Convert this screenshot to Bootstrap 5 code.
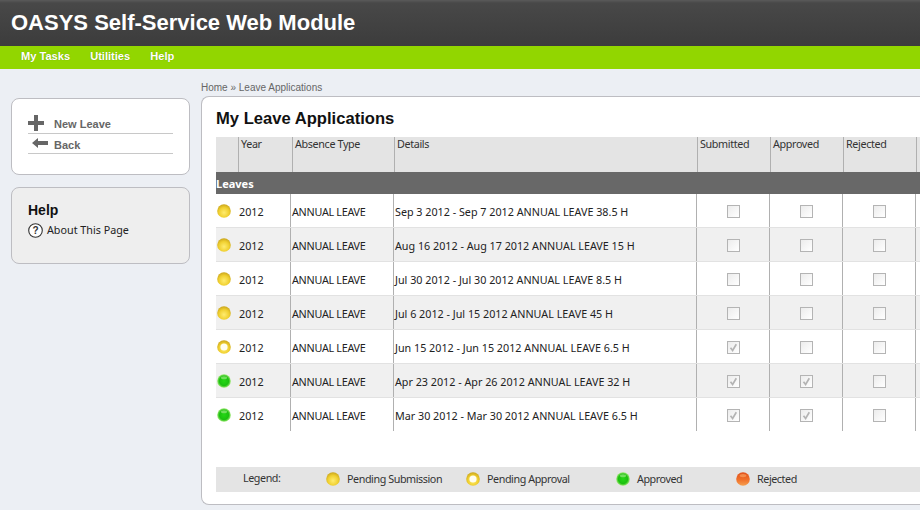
<!DOCTYPE html>
<html lang="en">
<head>
<meta charset="utf-8">
<title>OASYS Self-Service Web Module</title>
<link rel="stylesheet" href="https://cdn.jsdelivr.net/npm/bootstrap@5.3.0/dist/css/bootstrap.min.css">
<style>
html,body{height:510px;overflow:hidden}
body{background:#eceff4;font-family:"Noto Sans","Open Sans",sans-serif;font-size:10.75px;color:#222;line-height:1.2}
a{color:inherit;text-decoration:none}
.appbar{height:46px;background:linear-gradient(#5a5a5a 0,#484848 3px,#3c3c3c 100%);padding:1px 11px 0;align-items:center}
.appbar h1{font-family:"Liberation Sans",sans-serif;font-weight:700;font-size:22px;color:#fff;margin:0}
.menubar{height:23px;background:#92d600;padding:0 0 2px 21px;gap:20px;align-items:center;font-family:"Liberation Sans",sans-serif;font-weight:700;font-size:11.1px;color:#fff;text-shadow:0 0 1px #6f9f00}
.shell{padding:0 0 0 11px;gap:11px}
.sidecol{width:179px;flex:none;padding-top:29px;gap:12px}
.panel{border:1px solid #bdbdc2;border-radius:8px;background:#fff}
.actions{height:77px;padding:16px 16px 0}
.actionrow{align-items:center;border-bottom:1px solid #c8c8c8;font-family:"Liberation Sans",sans-serif;font-weight:700;font-size:11px;color:#666}
.actionrow.one{height:19px;gap:10px}
.actionrow.one svg{align-self:flex-start;flex:none}
.actionrow.one span{padding-top:1px}
.actionrow.two{height:20px;gap:6px}
.actionrow.two svg{flex:none;margin-bottom:1px}
.actionrow.two span{padding-top:5px}
.helpbox{height:77px;background:#eeeeee;padding:14px 16px}
.helpbox h2{font-family:"Liberation Sans",sans-serif;font-weight:700;font-size:14px;color:#111;margin:0 0 4px}
.helplink{gap:4px;align-items:center;color:#222}
.maincol{width:760px;flex:none}
.crumb{height:27px;padding-top:13px;font-size:10px;color:#666;font-family:"Liberation Sans",sans-serif}
.mainpanel{height:409px;padding:0 0 0 14px;border-right:0;border-radius:8px 0 0 8px;width:760px}
.mainpanel h2{font-family:"Liberation Sans",sans-serif;font-weight:700;font-size:16.6px;color:#111;margin:0;height:40px;padding-top:12px}
.colhead,.leaverow{display:grid;width:720px}
.colhead{grid-template-columns:22px 54px 102px 303px 73px 73px 73px 20px;height:35px;background:#e4e4e4;color:#333;letter-spacing:-.35px}
.colhead div{border-left:1px solid #b0b0b0;padding:1px 2px 0}
.colhead div:first-child{border-left:0}
.groupbar{height:22px;width:720px;background:#686868;color:#fff;font-weight:700;font-size:11px;line-height:23px}
.leaverow{grid-template-columns:74px 103px 303px 73px 73px 73px 21px;height:34px;border-bottom:1px solid #e2e2e2;align-items:stretch;color:#222}
.leaverow.shade{background:#f0f0f0}
.rowlist .leaverow:last-child{border-bottom-color:transparent}
.leaverow>div{display:flex;align-items:center;border-left:1px solid #b0b0b0;padding:3px 0 0 1px}
.leaverow>div:first-child{border-left:0;padding:1px 0 0 1px;gap:8px}
.leaverow>div:first-child span{padding-top:2px}
.leaverow>.kind{letter-spacing:-.27px}
.leaverow>.tick{justify-content:center;padding:1px 0 0 1px}
.ball{width:14px;height:14px;flex:none;display:block}
.tickbox{appearance:none;width:13px;height:13px;margin:0;border:1px solid #b4b4b4;background:linear-gradient(135deg,#ececec,#fff);display:block;opacity:1}
.tickbox:checked{background:url("data:image/svg+xml,%3Csvg xmlns='http://www.w3.org/2000/svg' viewBox='0 0 11 11'%3E%3Cpath d='M2.5 5.8 4.6 8.5 8.3 2.2' fill='none' stroke='%23b4b4b4' stroke-width='1.7'/%3E%3C/svg%3E") center/11px no-repeat,linear-gradient(135deg,#ececec,#fff)}
.legendbar{height:25px;width:720px;background:#e4e4e4;margin-top:35px;padding-bottom:1px;align-items:center;color:#333;letter-spacing:-.43px}
.legendbar .lab{width:110px;padding:0 0 1px 27px}
.legendbar .lgitem{gap:7px;align-items:center;flex:none}
.lg1{width:140px}.lg2{width:150px}.lg3{width:120px}
</style>
</head>
<body>
<svg width="0" height="0" class="d-block" aria-hidden="true">
<defs>
<radialGradient id="gy" cx="50%" cy="62%" r="62%"><stop offset="0" stop-color="#ffec70"/><stop offset=".6" stop-color="#f0d030"/><stop offset="1" stop-color="#c9a41c"/></radialGradient>
<radialGradient id="gg" cx="50%" cy="50%" r="50%"><stop offset="0" stop-color="#24d814"/><stop offset=".68" stop-color="#1cc010"/><stop offset="1" stop-color="#9ae870"/></radialGradient>
<linearGradient id="gr" x1="0" y1="0" x2="0" y2="1"><stop offset="0" stop-color="#e0521c"/><stop offset=".55" stop-color="#f0702a"/><stop offset="1" stop-color="#f6a050"/></linearGradient>
<symbol id="b-sub" viewBox="0 0 14 14"><circle cx="7" cy="7" r="6.8" fill="url(#gy)"/></symbol>
<symbol id="b-app" viewBox="0 0 14 14"><circle cx="7" cy="7" r="6.8" fill="url(#gy)"/><circle cx="7" cy="7" r="3.6" fill="#fffef0"/></symbol>
<symbol id="b-ok" viewBox="0 0 14 14"><circle cx="7" cy="7" r="6.8" fill="url(#gg)"/><ellipse cx="7" cy="3.8" rx="3" ry="1.5" fill="#a8f090" opacity=".6"/></symbol>
<symbol id="b-rej" viewBox="0 0 14 14"><circle cx="7" cy="7" r="6.8" fill="url(#gr)"/><ellipse cx="7" cy="3.6" rx="3.4" ry="1.7" fill="#ffb070" opacity=".55"/></symbol>
</defs>
</svg>
<header class="appbar d-flex"><h1>OASYS Self-Service Web Module</h1></header>
<nav class="menubar d-flex"><a href="#">My Tasks</a><a href="#">Utilities</a><a href="#">Help</a></nav>
<div class="shell d-flex">
  <aside class="sidecol d-flex flex-column">
    <div class="panel actions">
      <a href="#" class="actionrow one d-flex"><svg width="16" height="16" viewBox="0 0 16 16"><path d="M6 0h4v6h6v4h-6v6H6v-6H0V6h6z" fill="#666"/></svg><span>New Leave</span></a>
      <a href="#" class="actionrow two d-flex"><svg width="20" height="10" viewBox="0 0 20 10"><path d="M4 5 10 0V3H20V7H10V10z" fill="#666"/></svg><span>Back</span></a>
    </div>
    <div class="panel helpbox">
      <h2>Help</h2>
      <a href="#" class="helplink d-flex"><svg width="15" height="15" viewBox="0 0 15 15"><circle cx="7.500" cy="7.500" r="6.800" fill="#fff" stroke="#333" stroke-width="1.100"/><text x="7.500" y="11" text-anchor="middle" font-size="10" font-weight="700" font-family="Liberation Sans" fill="#333">?</text></svg><span>About This Page</span></a>
    </div>
  </aside>
  <main class="maincol">
    <div class="crumb">Home » Leave Applications</div>
    <section class="panel mainpanel">
      <h2>My Leave Applications</h2>
      <div class="colhead"><div></div><div>Year</div><div>Absence Type</div><div>Details</div><div>Submitted</div><div>Approved</div><div>Rejected</div><div></div></div>
      <div class="groupbar">Leaves</div>
      <div class="rowlist">
      <div class="leaverow"><div><svg class="ball"><use href="#b-sub"/></svg><span>2012</span></div><div class="kind">ANNUAL LEAVE</div><div>Sep 3 2012 - Sep 7 2012 ANNUAL LEAVE 38.5 H</div><div class="tick"><input class="tickbox" type="checkbox" disabled></div><div class="tick"><input class="tickbox" type="checkbox" disabled></div><div class="tick"><input class="tickbox" type="checkbox" disabled></div><div></div></div>
      <div class="leaverow shade"><div><svg class="ball"><use href="#b-sub"/></svg><span>2012</span></div><div class="kind">ANNUAL LEAVE</div><div>Aug 16 2012 - Aug 17 2012 ANNUAL LEAVE 15 H</div><div class="tick"><input class="tickbox" type="checkbox" disabled></div><div class="tick"><input class="tickbox" type="checkbox" disabled></div><div class="tick"><input class="tickbox" type="checkbox" disabled></div><div></div></div>
      <div class="leaverow"><div><svg class="ball"><use href="#b-sub"/></svg><span>2012</span></div><div class="kind">ANNUAL LEAVE</div><div>Jul 30 2012 - Jul 30 2012 ANNUAL LEAVE 8.5 H</div><div class="tick"><input class="tickbox" type="checkbox" disabled></div><div class="tick"><input class="tickbox" type="checkbox" disabled></div><div class="tick"><input class="tickbox" type="checkbox" disabled></div><div></div></div>
      <div class="leaverow shade"><div><svg class="ball"><use href="#b-sub"/></svg><span>2012</span></div><div class="kind">ANNUAL LEAVE</div><div>Jul 6 2012 - Jul 15 2012 ANNUAL LEAVE 45 H</div><div class="tick"><input class="tickbox" type="checkbox" disabled></div><div class="tick"><input class="tickbox" type="checkbox" disabled></div><div class="tick"><input class="tickbox" type="checkbox" disabled></div><div></div></div>
      <div class="leaverow"><div><svg class="ball"><use href="#b-app"/></svg><span>2012</span></div><div class="kind">ANNUAL LEAVE</div><div>Jun 15 2012 - Jun 15 2012 ANNUAL LEAVE 6.5 H</div><div class="tick"><input class="tickbox" type="checkbox" checked disabled></div><div class="tick"><input class="tickbox" type="checkbox" disabled></div><div class="tick"><input class="tickbox" type="checkbox" disabled></div><div></div></div>
      <div class="leaverow shade"><div><svg class="ball"><use href="#b-ok"/></svg><span>2012</span></div><div class="kind">ANNUAL LEAVE</div><div>Apr 23 2012 - Apr 26 2012 ANNUAL LEAVE 32 H</div><div class="tick"><input class="tickbox" type="checkbox" checked disabled></div><div class="tick"><input class="tickbox" type="checkbox" checked disabled></div><div class="tick"><input class="tickbox" type="checkbox" disabled></div><div></div></div>
      <div class="leaverow"><div><svg class="ball"><use href="#b-ok"/></svg><span>2012</span></div><div class="kind">ANNUAL LEAVE</div><div>Mar 30 2012 - Mar 30 2012 ANNUAL LEAVE 6.5 H</div><div class="tick"><input class="tickbox" type="checkbox" checked disabled></div><div class="tick"><input class="tickbox" type="checkbox" checked disabled></div><div class="tick"><input class="tickbox" type="checkbox" disabled></div><div></div></div>
      </div>
      <div class="legendbar d-flex">
        <div class="lab">Legend:</div>
        <div class="lgitem lg1 d-flex"><svg class="ball"><use href="#b-sub"/></svg>Pending Submission</div>
        <div class="lgitem lg2 d-flex"><svg class="ball"><use href="#b-app"/></svg>Pending Approval</div>
        <div class="lgitem lg3 d-flex"><svg class="ball"><use href="#b-ok"/></svg>Approved</div>
        <div class="lgitem d-flex"><svg class="ball"><use href="#b-rej"/></svg>Rejected</div>
      </div>
    </section>
  </main>
</div>
<script src="https://cdn.jsdelivr.net/npm/bootstrap@5.3.0/dist/js/bootstrap.bundle.min.js"></script>
</body>
</html>
